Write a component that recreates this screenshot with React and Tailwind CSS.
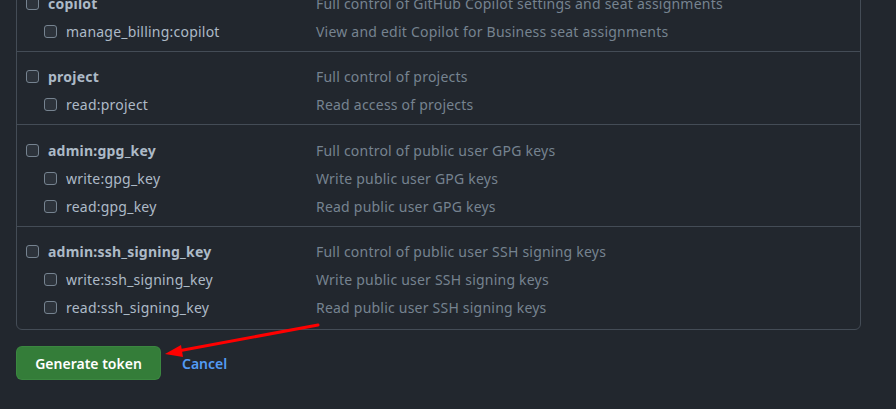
import React from 'react';

const sections = [
  {
    name: 'copilot',
    desc: 'Full control of GitHub Copilot settings and seat assignments',
    pad: 'pt-[10px] pb-[6px]',
    scopes: [['manage_billing:copilot', 'View and edit Copilot for Business seat assignments']],
  },
  {
    name: 'project',
    desc: 'Full control of projects',
    pad: 'pt-[10px] pb-[6px]',
    scopes: [['read:project', 'Read access of projects']],
  },
  {
    name: 'admin:gpg_key',
    desc: 'Full control of public user GPG keys',
    pad: 'pt-[11px] pb-[6px]',
    scopes: [
      ['write:gpg_key', 'Write public user GPG keys'],
      ['read:gpg_key', 'Read public user GPG keys'],
    ],
  },
  {
    name: 'admin:ssh_signing_key',
    desc: 'Full control of public user SSH signing keys',
    pad: 'pt-[10px] pb-[8px]',
    scopes: [
      ['write:ssh_signing_key', 'Write public user SSH signing keys'],
      ['read:ssh_signing_key', 'Read public user SSH signing keys'],
    ],
  },
];

const Box = () => (
  <span className="inline-block w-[13px] h-[13px] rounded-[3px] border border-[#768390] bg-[#2d333b] shrink-0" />
);

export default function App() {
  return (
    <div
      className="relative w-[896px] h-[409px] overflow-hidden bg-[#22272e] text-[14px]"
      style={{ fontFamily: '"Segoe UI", "Noto Sans", sans-serif' }}
    >
      <div className="ml-4 w-[845px] -mt-[22px] border border-[#444c56] rounded-md tracking-[0.22px]">
        {sections.map((s, i) => (
          <div key={s.name} className={`${s.pad} ${i > 0 ? 'border-t border-[#444c56]' : ''}`}>
            <div className="flex items-center h-[28px]">
              <div className="flex items-center gap-[9px] pl-[9px] w-[299px]">
                <Box />
                <span className="font-bold text-[#adbac7]">{s.name}</span>
              </div>
              <span className="text-[#768390]">{s.desc}</span>
            </div>
            {s.scopes.map(([n, d]) => (
              <div key={n} className="flex items-center h-[28px]">
                <div className="flex items-center gap-[9px] pl-[27px] w-[299px]">
                  <Box />
                  <span className="text-[#adbac7]">{n}</span>
                </div>
                <span className="text-[#768390]">{d}</span>
              </div>
            ))}
          </div>
        ))}
      </div>

      {/* actions */}
      <div className="flex items-center gap-[21px] ml-4 mt-4">
        <button className="h-[34px] w-[145px] rounded-md bg-[#347d39] border border-[#46954a]/40 text-white font-semibold text-[14px]">
          Generate token
        </button>
        <a className="text-[#539bf5] font-semibold">Cancel</a>
      </div>

      <svg className="absolute left-0 top-0 pointer-events-none" width="896" height="409">
        <line x1="318" y1="325" x2="178" y2="351" stroke="#ff0000" strokeWidth="3" strokeLinecap="round" />
        <polygon points="165,354 181,345 183,357" fill="#ff0000" />
      </svg>
    </div>
  );
}
